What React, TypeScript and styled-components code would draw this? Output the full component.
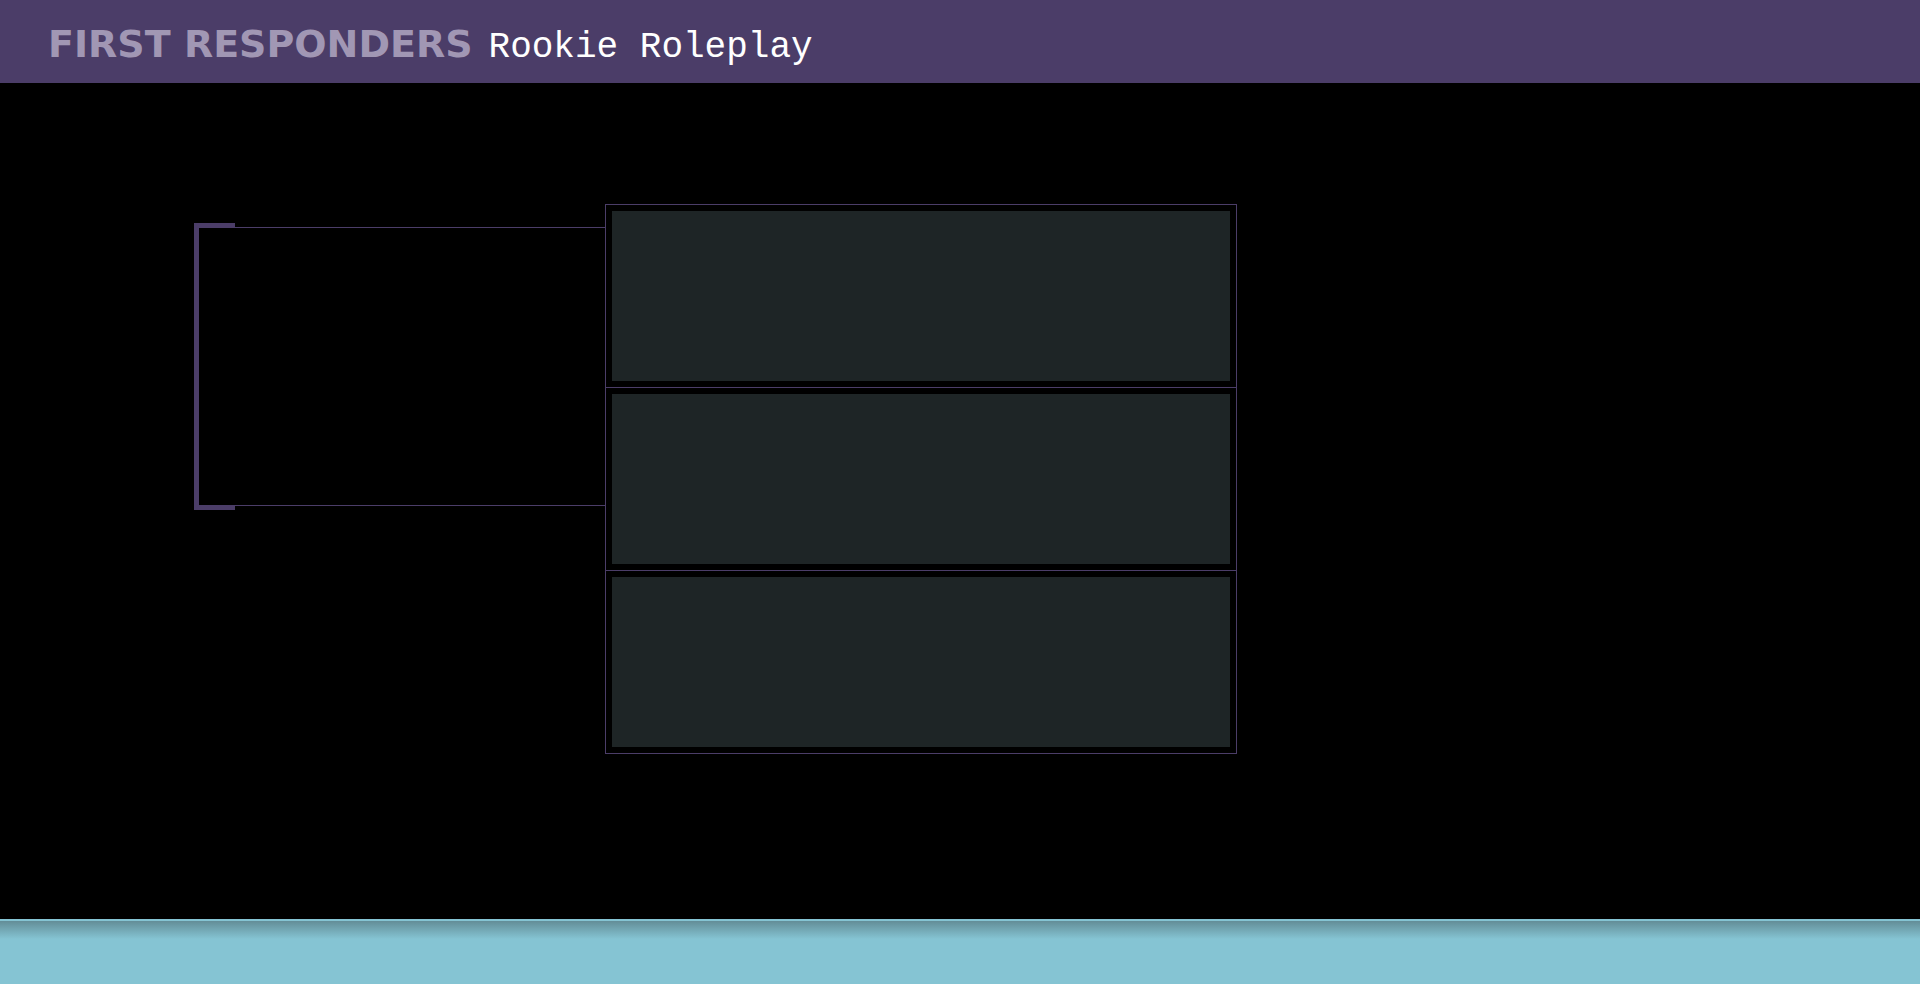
import React from "react";
import styled, { createGlobalStyle } from "styled-components";

const purple = "#4b3d68";
const sky = "#85c4d3";

const GlobalStyle = createGlobalStyle`
  *, *::before, *::after { box-sizing: border-box; }
  html, body, #root { min-height: 100vh; }
  body { margin: 0; background: #000; }
  #root { display: flex; }
`;

const Page = styled.div`
  flex: 1;
  display: flex;
  flex-direction: column;
`;

const Header = styled.header`
  display: flex;
  align-items: baseline;
  gap: 16px;
  min-height: 83px;
  padding: 20px 48px 0;
  background: ${purple};
`;

const Brand = styled.span`
  font: 700 38px/48px "DejaVu Sans", sans-serif;
  color: #a197b4;
  white-space: nowrap;
`;

const Title = styled.h1`
  margin: 0;
  font: 400 36px/48px "Liberation Mono", monospace;
  color: #fff;
  white-space: nowrap;
`;

const Main = styled.main`
  flex: 1;
  display: grid;
  grid-template-columns: 194fr 411fr 632fr 683fr;
  align-items: start;
  padding: 121px 0 165px;
`;

const Bracket = styled.section`
  position: relative;
  grid-column: 2;
  height: 279px;
  margin-top: 23px;
  border: 1px solid ${purple};
  border-width: 1px 0 1px 5px;

  &::before,
  &::after {
    content: "";
    position: absolute;
    left: -5px;
    width: 41px;
    height: 5px;
    background: ${purple};
  }
  &::before { top: -5px; }
  &::after { bottom: -5px; }
`;

const Panels = styled.ul`
  grid-column: 3;
  margin: 0;
  padding: 0;
  list-style: none;
  border: 1px solid ${purple};
`;

const Panel = styled.li`
  padding: 6px;

  & + & { border-top: 1px solid ${purple}; }
`;

const Screen = styled.div`
  height: 170px;
  background: #1e2526;
`;

const Footer = styled.footer`
  height: 65px;
  border-top: 2px solid ${sky};
  background: linear-gradient(#638d97, ${sky} 18px);
`;

export default function App() {
  return (
    <>
      <GlobalStyle />
      <Page>
        <Header>
          <Brand>FIRST RESPONDERS</Brand>
          <Title>Rookie Roleplay</Title>
        </Header>
        <Main>
          <Bracket />
          <Panels>
            {[1, 2, 3].map((id) => (
              <Panel key={id}>
                <Screen />
              </Panel>
            ))}
          </Panels>
        </Main>
        <Footer />
      </Page>
    </>
  );
}
